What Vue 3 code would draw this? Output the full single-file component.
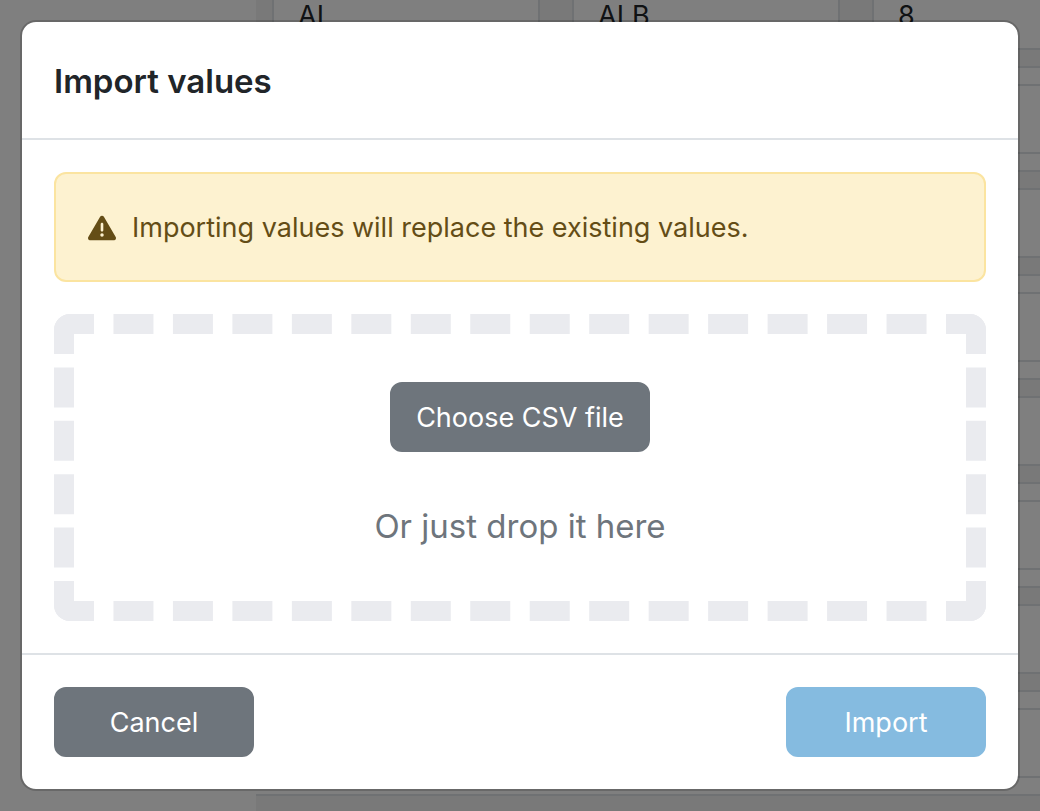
<script setup>
import { ref } from 'vue'

const rows = ref([
  ['AL', 'ALB', '8'],
  ...Array.from({ length: 8 }, () => ['', '', '']),
])
const columns = ['Alpha-2', 'Alpha-3', 'Numeric']
const fileInput = ref(null)
</script>

<template>
  <div class="page">
    <main class="content" aria-hidden="true">
      <table class="values">
        <tbody>
          <tr v-for="(row, r) in rows" :key="r">
            <td v-for="(name, c) in columns" :key="name">
              <input v-model="row[c]" class="cell" type="text" tabindex="-1" :aria-label="name" />
            </td>
          </tr>
        </tbody>
      </table>
    </main>

    <div class="backdrop">
      <section class="modal" role="dialog" aria-modal="true" aria-labelledby="title">
        <header class="header">
          <h1 id="title" class="title">Import values</h1>
        </header>
        <div class="body">
          <div class="alert" role="alert">
            <svg class="icon" viewBox="0 0 512 512" aria-hidden="true">
              <path
                fill="currentColor"
                d="M256 32c14.200 0 27.300 7.500 34.500 19.800l216 368c7.300 12.400 7.300 27.700 .2 40.100S486.300 480 472 480L40 480c-14.300 0-27.600-7.700-34.700-20.100s-7-27.800 .2-40.100l216-368C228.700 39.500 241.800 32 256 32zm0 128c-13.300 0-24 10.700-24 24l0 112c0 13.300 10.700 24 24 24s24-10.700 24-24l0-112c0-13.300-10.700-24-24-24zm32 224a32 32 0 1 0 -64 0 32 32 0 1 0 64 0z"
              />
            </svg>
            <span>Importing values will replace the existing values.</span>
          </div>
          <div class="dropzone">
            <div class="dashes">
              <button class="btn secondary" type="button" @click="fileInput.click()">Choose CSV file</button>
              <input ref="fileInput" type="file" accept=".csv" aria-label="CSV file" hidden />
              <p class="hint">Or just drop it here</p>
            </div>
          </div>
        </div>
        <footer class="footer">
          <button class="btn secondary wide" type="button">Cancel</button>
          <button class="btn primary wide" type="button" disabled>Import</button>
        </footer>
      </section>
    </div>
  </div>
</template>

<style>
body {
  margin: 0;
  background: #fff;
}
</style>

<style scoped>
.page {
  position: relative;
  height: 100vh;
  overflow: hidden;
  font-family: Inter, "Liberation Sans", sans-serif;
  font-size: 27px;
  line-height: 42px;
  color: #212529;
}
.page * {
  box-sizing: border-box;
}
.content {
  display: flow-root;
  padding-left: 256px;
}
.values {
  width: 900px;
  margin-top: -38px;
  table-layout: fixed;
  border-collapse: separate;
  border-spacing: 0;
}
.values td {
  height: 104px;
  padding: 16px;
  border-top: 2px solid #dee2e6;
}
.values tr:nth-child(odd) td {
  background: #f2f2f2;
}
.cell {
  display: block;
  width: 100%;
  height: 70px;
  padding: 12px 24px;
  border: 2px solid #dee2e6;
  background: #fff;
  font: inherit;
  color: inherit;
}
.backdrop {
  position: absolute;
  inset: 0;
  padding: 20px;
  background: rgba(0, 0, 0, 0.5);
}
.modal {
  border: 2px solid rgba(0, 0, 0, 0.175);
  border-radius: 16px;
  background: #fff;
  background-clip: padding-box;
}
.header {
  padding: 33px 32px 31px;
  border-bottom: 2px solid #dee2e6;
}
.title {
  margin: 0;
  font-size: 33px;
  font-weight: 600;
  line-height: 52px;
}
.body {
  display: flex;
  flex-direction: column;
  gap: 32px;
  padding: 32px;
}
.alert {
  display: flex;
  align-items: center;
  gap: 16px;
  padding: 33px 32px 31px;
  border: 2px solid #fbe4a0;
  border-radius: 12px;
  background: #fdf2d0;
  color: #644d16;
}
.icon {
  width: 28px;
  height: 28px;
  flex: none;
}
.dropzone {
  overflow: hidden;
  border-radius: 16px;
}
.dashes {
  display: flex;
  flex-direction: column;
  align-items: center;
  gap: 48px;
  padding: 48px;
  border: 20px dashed #eaebef;
}
.hint {
  margin: 0;
  font-size: 33px;
  line-height: 53px;
  color: #6e757c;
}
.btn {
  padding: 13px 24px 11px;
  border: 2px solid transparent;
  border-radius: 12px;
  font: inherit;
  color: #fff;
}
.secondary {
  background: #6e757c;
  border-color: #6e757c;
}
.primary {
  background: #85bbe0;
  border-color: #85bbe0;
}
.wide {
  min-width: 200px;
}
.footer {
  display: flex;
  justify-content: space-between;
  padding: 32px;
  border-top: 2px solid #dee2e6;
}
</style>
